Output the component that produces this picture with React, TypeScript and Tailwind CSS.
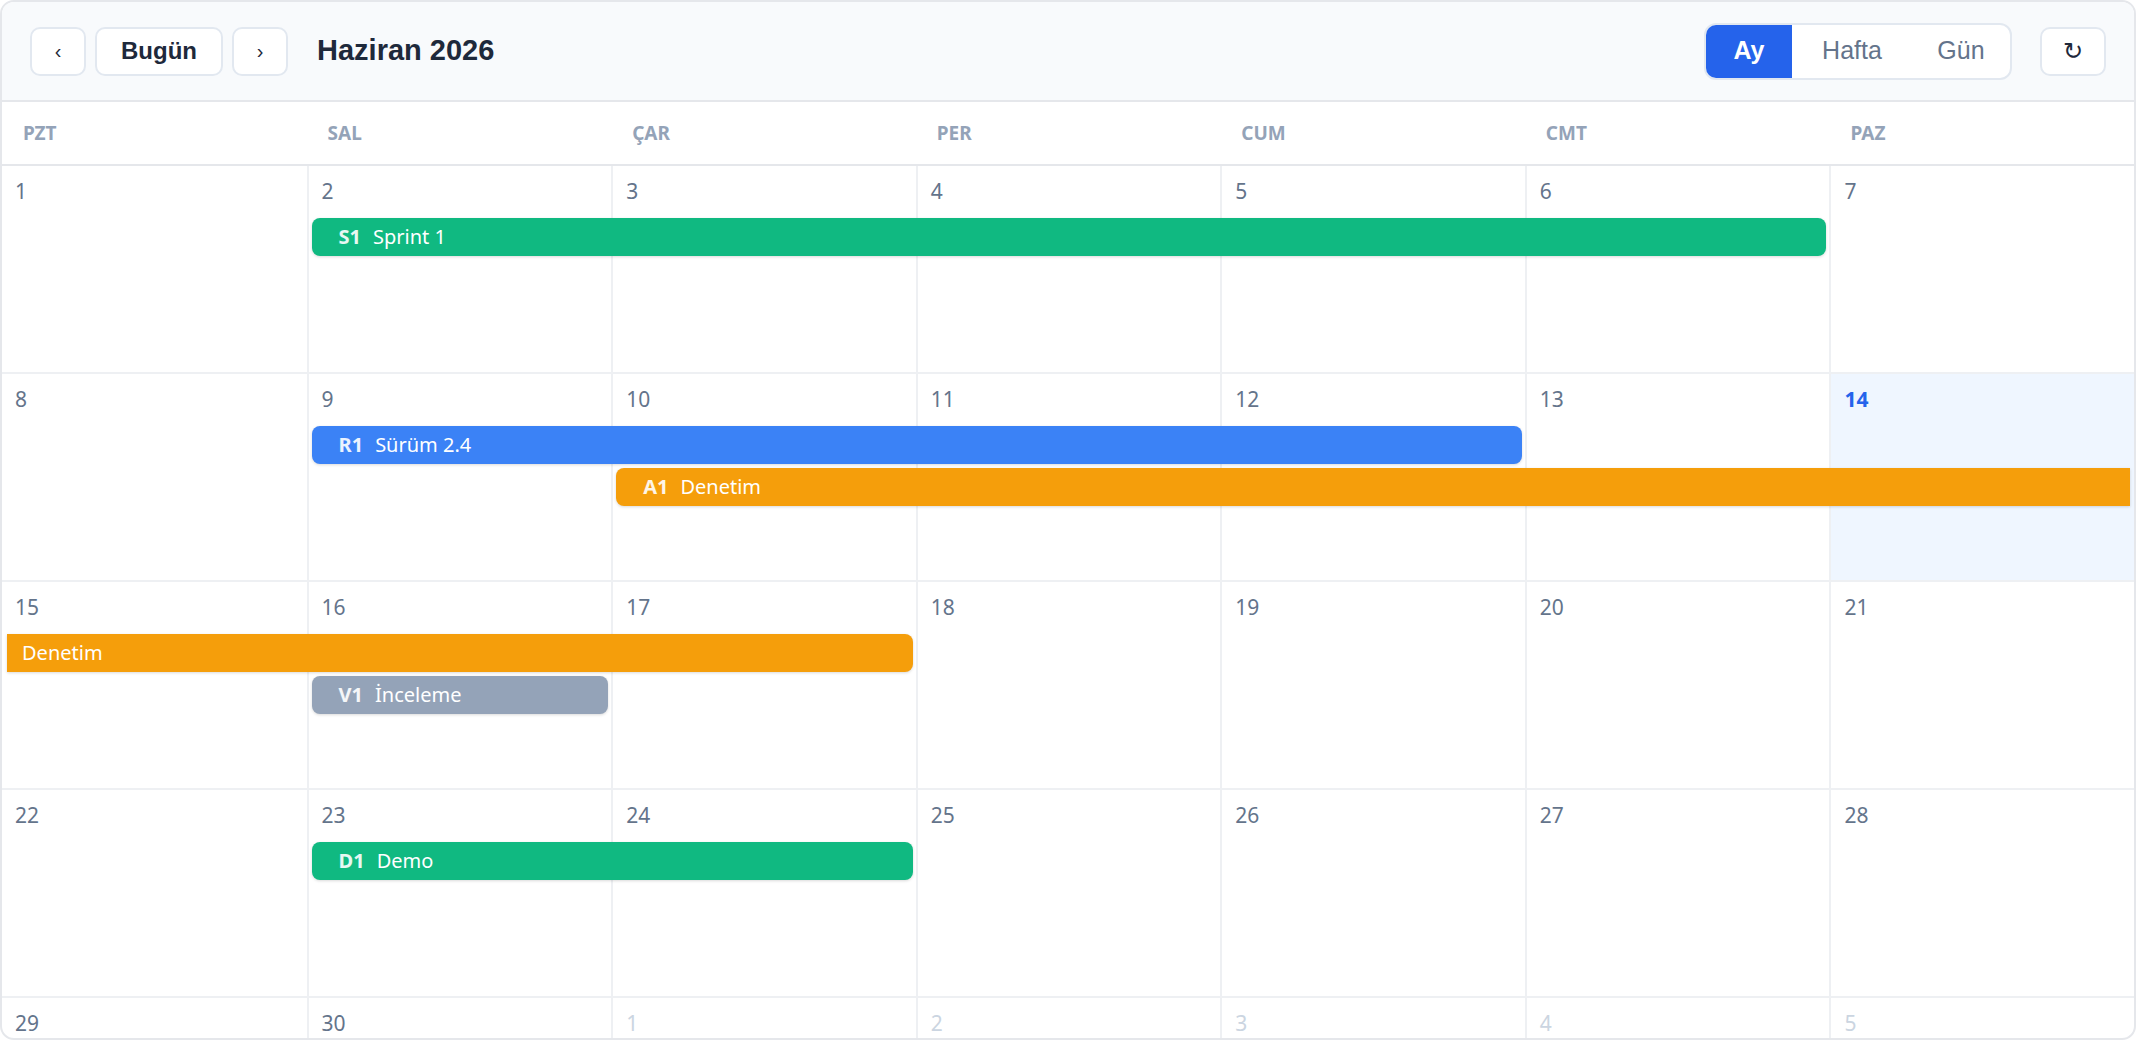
import React from "react";

type Ev = { code?: string; label: string; color: string; start: number; span: number; row: number; openL?: boolean; openR?: boolean };

const weeks: { days: { n: number; muted?: boolean; today?: boolean }[]; events: Ev[] }[] = [
  { days: [1, 2, 3, 4, 5, 6, 7].map((n) => ({ n })), events: [{ code: "S1", label: "Sprint 1", color: "bg-[#10b981]", start: 2, span: 5, row: 1 }] },
  {
    days: [8, 9, 10, 11, 12, 13, 14].map((n) => ({ n, today: n === 14 })),
    events: [
      { code: "R1", label: "Sürüm 2.4", color: "bg-[#3b82f6]", start: 2, span: 4, row: 1 },
      { code: "A1", label: "Denetim", color: "bg-[#f59e0b]", start: 3, span: 5, row: 2, openR: true },
    ],
  },
  {
    days: [15, 16, 17, 18, 19, 20, 21].map((n) => ({ n })),
    events: [
      { label: "Denetim", color: "bg-[#f59e0b]", start: 1, span: 3, row: 1, openL: true },
      { code: "V1", label: "İnceleme", color: "bg-[#94a3b8]", start: 2, span: 1, row: 2 },
    ],
  },
  { days: [22, 23, 24, 25, 26, 27, 28].map((n) => ({ n })), events: [{ code: "D1", label: "Demo", color: "bg-[#10b981]", start: 2, span: 2, row: 1 }] },
  { days: [{ n: 29 }, { n: 30 }, { n: 1, muted: true }, { n: 2, muted: true }, { n: 3, muted: true }, { n: 4, muted: true }, { n: 5, muted: true }], events: [] },
];

const colStart: Record<number, string> = { 1: "col-start-1", 2: "col-start-2", 3: "col-start-3", 4: "col-start-4", 5: "col-start-5", 6: "col-start-6", 7: "col-start-7" };
const colSpan: Record<number, string> = { 1: "col-span-1", 2: "col-span-2", 3: "col-span-3", 4: "col-span-4", 5: "col-span-5", 6: "col-span-6", 7: "col-span-7" };
const rowStart: Record<number, string> = { 1: "row-start-1", 2: "row-start-2" };

const noto = { fontFamily: '"Noto Sans", "Open Sans", sans-serif' };
const lib = { fontFamily: '"Liberation Sans", Arial, sans-serif' };

export default function App() {
  return (
    <div className="w-[2136px] h-[1040px] bg-white" style={noto}>
      <div className="w-full h-full overflow-hidden rounded-[14px] border-2 border-[#e5e7eb] flex flex-col">
        <div className="h-[100px] shrink-0 bg-[#f8fafc] border-b-2 border-[#e5e7eb] flex items-center px-[28px]">
          <button className="w-[56px] h-[49px] rounded-[10px] border-2 border-[#e2e8f0] bg-white text-[20px] text-[#1e293b]" style={lib}>‹</button>
          <button className="ml-[9px] w-[128px] h-[49px] rounded-[10px] border-2 border-[#e2e8f0] bg-white text-[24px] font-bold text-[#1e293b]" style={lib}>Bugün</button>
          <button className="ml-[9px] w-[56px] h-[49px] rounded-[10px] border-2 border-[#e2e8f0] bg-white text-[20px] text-[#1e293b]" style={lib}>›</button>
          <div className="ml-[29px] text-[29px] font-bold text-[#1e293b]" style={lib}>Haziran 2026</div>
          <div className="ml-auto flex h-[57px] w-[308px] rounded-[12px] border-2 border-[#e2e8f0] bg-white overflow-hidden text-[25px]" style={lib}>
            <div className="w-[86px] bg-[#2563eb] text-white font-bold flex items-center justify-center">Ay</div>
            <div className="w-[120px] text-[#64748b] flex items-center justify-center">Hafta</div>
            <div className="flex-1 text-[#64748b] flex items-center justify-center">Gün</div>
          </div>
          <button className="ml-[28px] w-[66px] h-[49px] rounded-[10px] border-2 border-[#e2e8f0] bg-white text-[24px] text-[#1e293b] flex items-center justify-center" style={{ fontFamily: '"DejaVu Sans", sans-serif' }}>↻</button>
        </div>
        <div className="grid grid-cols-7 h-[64px] shrink-0 border-b-2 border-[#e5e7eb]">
          {["PZT", "SAL", "ÇAR", "PER", "CUM", "CMT", "PAZ"].map((d) => (
            <div key={d} className="pl-[21px] flex items-center text-[19px] font-bold text-[#94a3b8]">{d}</div>
          ))}
        </div>
        {weeks.map((w, wi) => (
          <div key={wi} className="relative h-[208px] shrink-0 border-b-2 border-[#eef0f3]">
            <div className="grid grid-cols-7 h-full">
              {w.days.map((d, di) => (
                <div key={di} className={`${di > 0 ? "border-l-2 border-[#eef0f3]" : ""} ${d.today ? "bg-[#eff6ff]" : ""} pl-[13px] pt-[10px]`}>
                  <span className={`text-[21px] ${d.today ? "font-bold text-[#2563eb]" : d.muted ? "text-[#cbd5e1]" : "text-[#64748b]"}`}>{d.n}</span>
                </div>
              ))}
            </div>
            <div className="absolute inset-x-0 top-[52px] grid grid-cols-7 auto-rows-[38px] gap-y-[4px]">
              {w.events.map((e, ei) => (
                <div
                  key={ei}
                  className={`${colStart[e.start]} ${colSpan[e.span]} ${rowStart[e.row]} ${e.color} ${e.openL ? "ml-[5px] rounded-l-none pl-[15px]" : "ml-[5px] pl-[27px]"} ${e.openR ? "mr-[4px] rounded-r-none" : "mr-[3px]"} rounded-[8px] shadow-[0_1px_3px_rgba(0,0,0,0.15)] flex items-center text-white text-[20px] whitespace-nowrap overflow-hidden`}
                >
                  {e.code && <span className="font-bold mr-[12px] text-white/90">{e.code}</span>}
                  <span>{e.label}</span>
                </div>
              ))}
            </div>
          </div>
        ))}
      </div>
    </div>
  );
}
